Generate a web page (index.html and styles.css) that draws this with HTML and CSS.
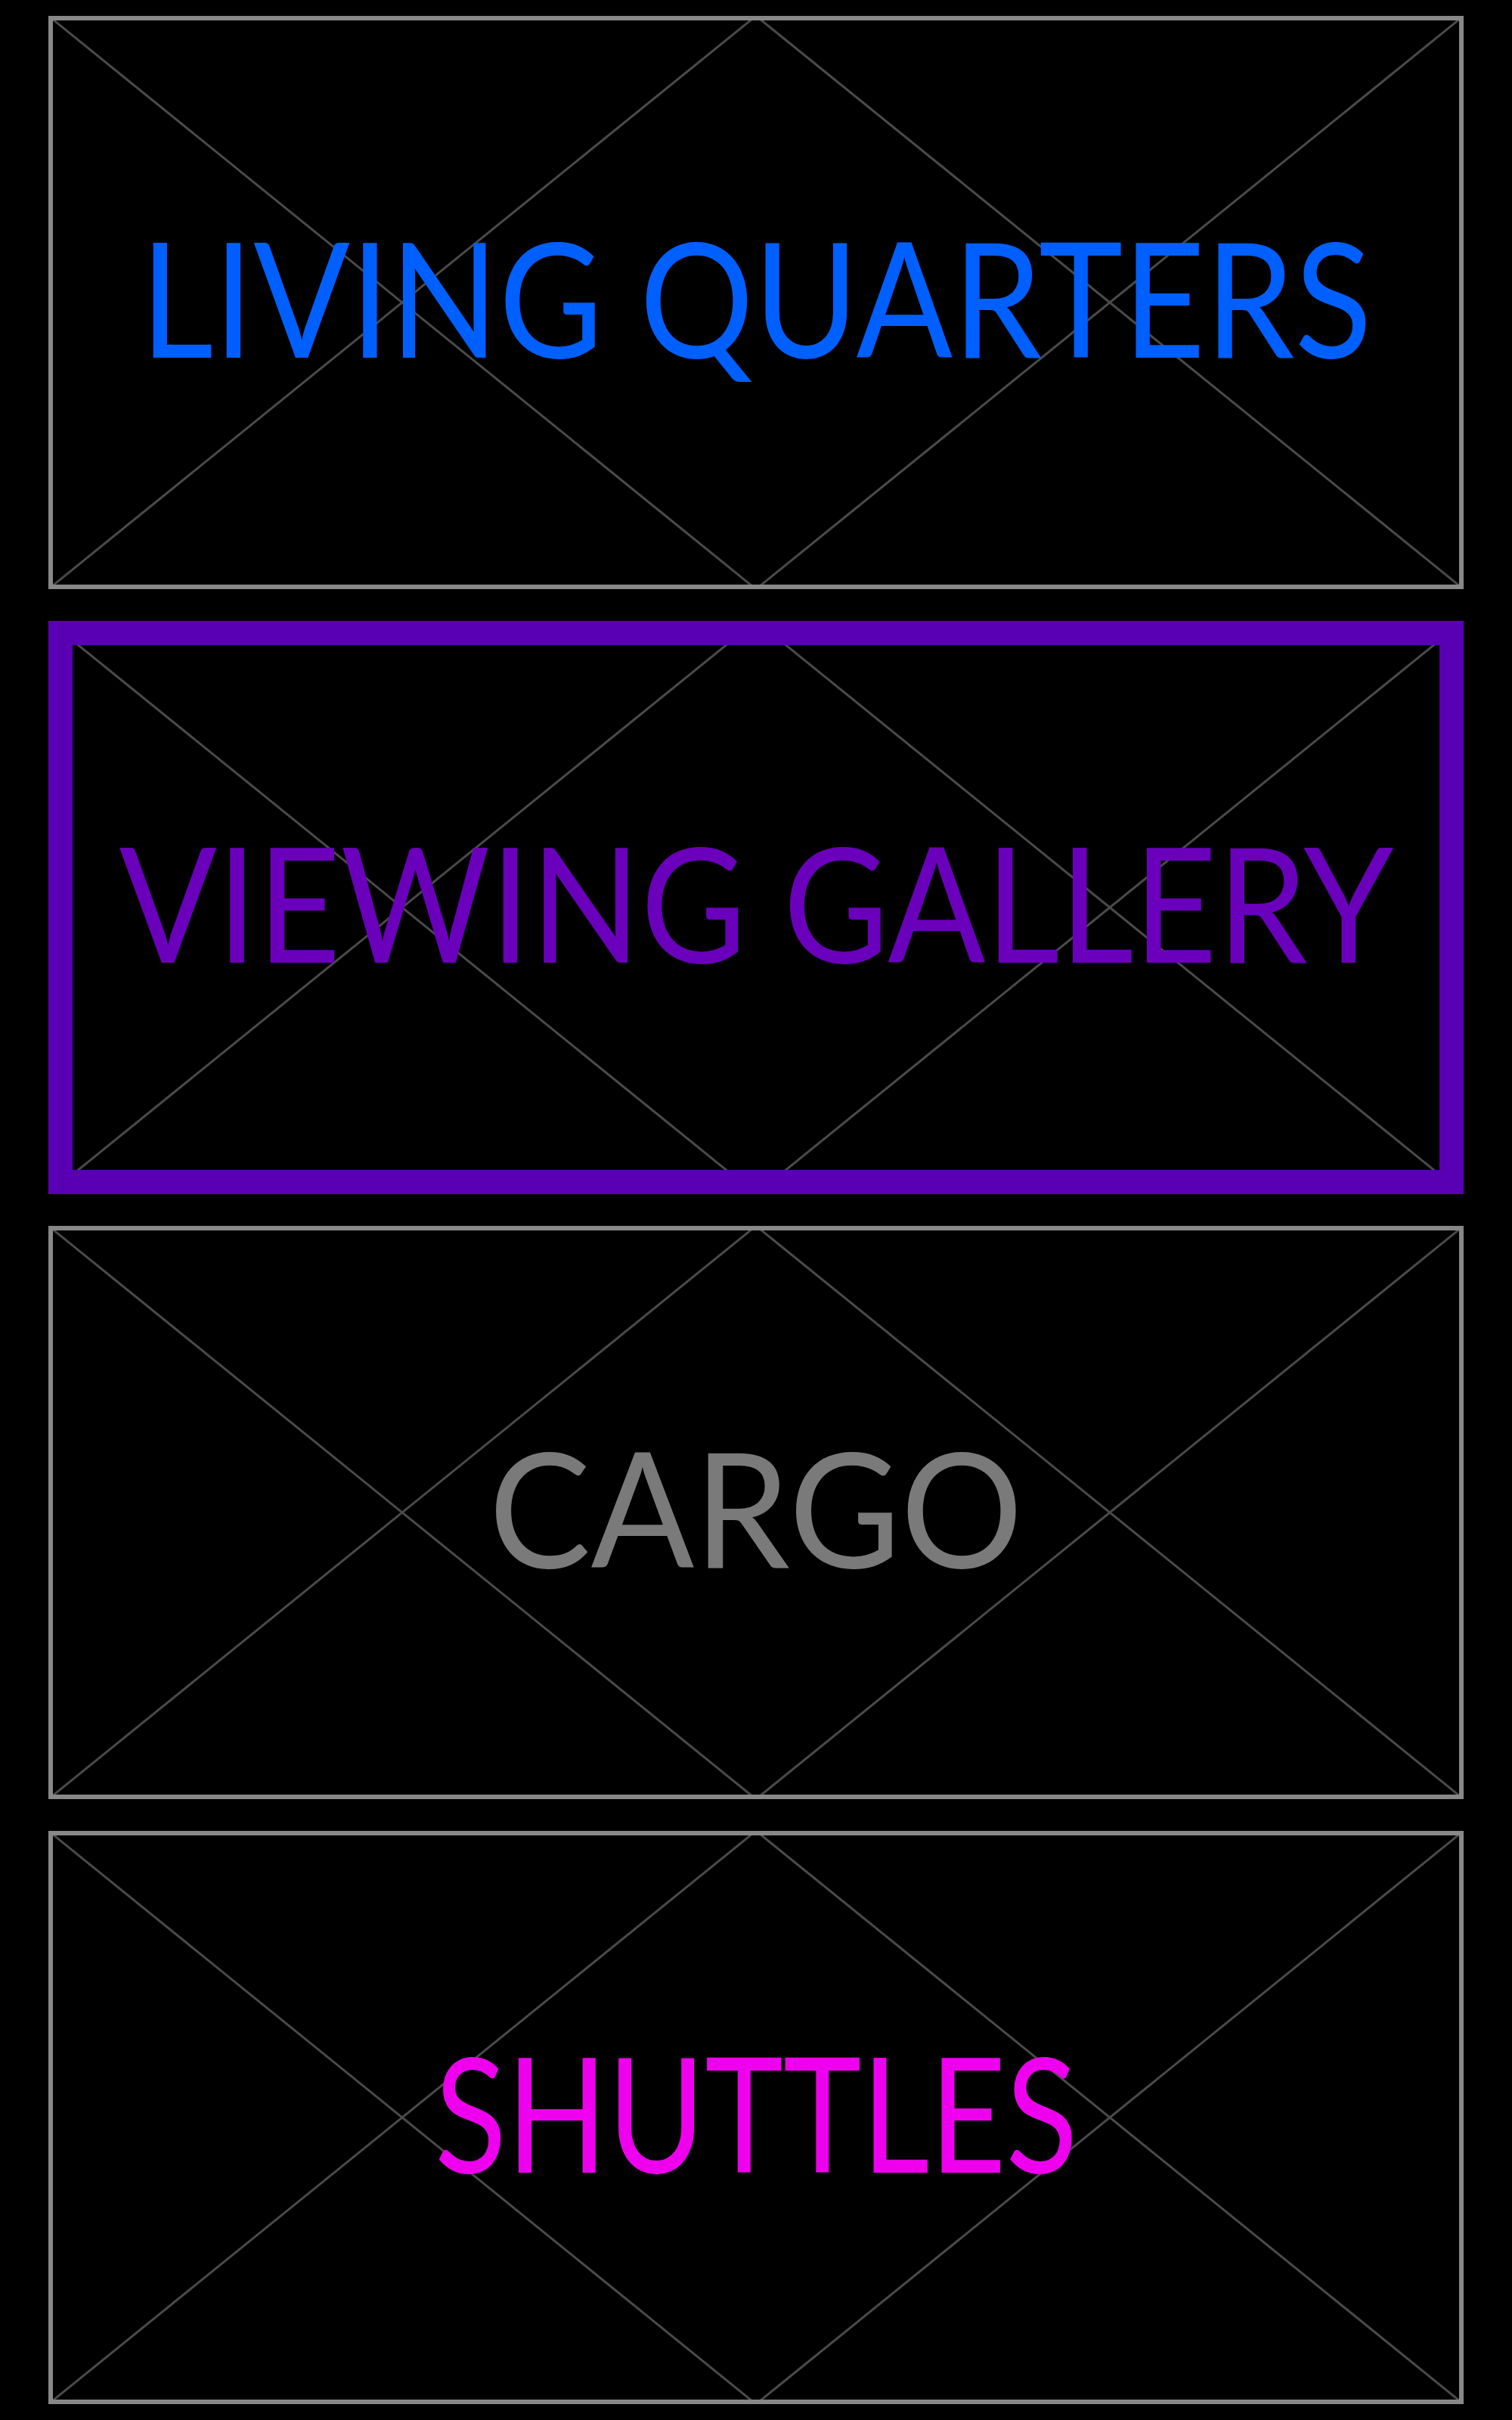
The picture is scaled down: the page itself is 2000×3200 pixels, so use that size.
FILE: index.html
```html
<!DOCTYPE html>
<html lang="en">
<head>
<meta charset="utf-8">
<title>Station Sections</title>
<link rel="stylesheet" href="styles.css">
</head>
<body>
<main class="stack">
  <section class="card">
    <svg class="placeholder" viewBox="0 0 100 100" preserveAspectRatio="none" aria-hidden="true">
      <line x1="0" y1="0" x2="50" y2="100"/><line x1="0" y1="100" x2="50" y2="0"/>
      <line x1="50" y1="0" x2="100" y2="100"/><line x1="50" y1="100" x2="100" y2="0"/>
    </svg>
    <h2 class="label label-blue label-living">LIVING QUARTERS</h2>
  </section>
  <section class="card card-active">
    <svg class="placeholder" viewBox="0 0 100 100" preserveAspectRatio="none" aria-hidden="true">
      <line x1="0" y1="0" x2="50" y2="100"/><line x1="0" y1="100" x2="50" y2="0"/>
      <line x1="50" y1="0" x2="100" y2="100"/><line x1="50" y1="100" x2="100" y2="0"/>
    </svg>
    <h2 class="label label-purple label-gallery">VIEWING GALLERY</h2>
  </section>
  <section class="card">
    <svg class="placeholder" viewBox="0 0 100 100" preserveAspectRatio="none" aria-hidden="true">
      <line x1="0" y1="0" x2="50" y2="100"/><line x1="0" y1="100" x2="50" y2="0"/>
      <line x1="50" y1="0" x2="100" y2="100"/><line x1="50" y1="100" x2="100" y2="0"/>
    </svg>
    <h2 class="label label-gray label-cargo">CARGO</h2>
  </section>
  <section class="card">
    <svg class="placeholder" viewBox="0 0 100 100" preserveAspectRatio="none" aria-hidden="true">
      <line x1="0" y1="0" x2="50" y2="100"/><line x1="0" y1="100" x2="50" y2="0"/>
      <line x1="50" y1="0" x2="100" y2="100"/><line x1="50" y1="100" x2="100" y2="0"/>
    </svg>
    <h2 class="label label-magenta label-shuttles">SHUTTLES</h2>
  </section>
</main>
</body>
</html>
```

FILE: styles.css
```css
html, body {
  margin: 0;
  padding: 0;
  background: #000;
}

.stack {
  display: flex;
  flex-direction: column;
  gap: 42px;
  padding: 21px 64px;
}

.card {
  position: relative;
  box-sizing: border-box;
  height: 758px;
  border: 6px solid #888888;
  overflow: hidden;
  display: flex;
  align-items: center;
  justify-content: center;
}

.card .placeholder {
  position: absolute;
  top: -6px;
  left: -6px;
  width: calc(100% + 12px);
  height: calc(100% + 12px);
}

.card-active {
  border: 32px solid #5a00b4;
}

.card-active .placeholder {
  top: -32px;
  left: -32px;
  width: calc(100% + 64px);
  height: calc(100% + 64px);
}

.placeholder line {
  stroke: #4a4a4a;
  stroke-width: 3;
  vector-effect: non-scaling-stroke;
}

.label {
  --sx: 0.9;
  position: relative;
  margin: 0;
  padding-bottom: 16px;
  font-family: "Lato", "DejaVu Sans", sans-serif;
  font-weight: 400;
  font-size: 211px;
  line-height: 1.2;
  white-space: nowrap;
  transform: scaleX(var(--sx));
}

.label-living { --sx: 0.894; }
.label-gallery { --sx: 0.905; }
.label-cargo { --sx: 0.958; }
.label-shuttles { --sx: 0.83; }

.label-blue { color: #005fff; }
.label-purple { color: #6a00bb; }
.label-gray { color: #7a7a7a; }
.label-magenta { color: #ee00ee; }
```
